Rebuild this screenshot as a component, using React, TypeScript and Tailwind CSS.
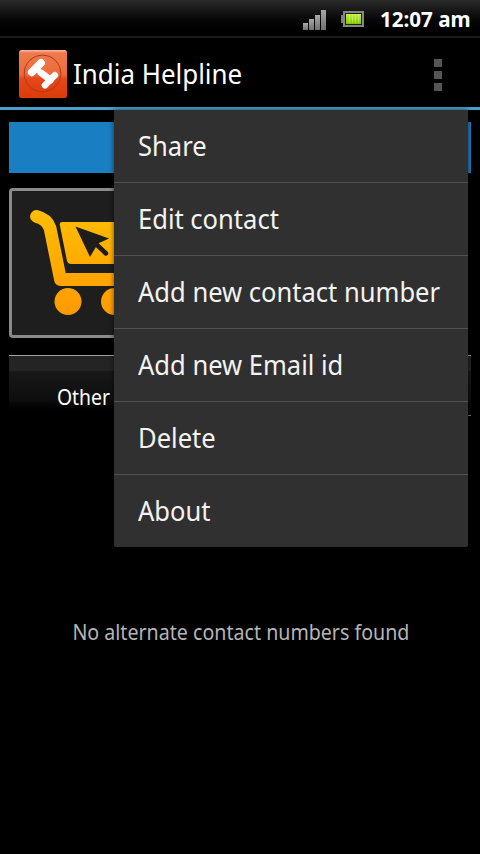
const menuItems = [
  'Share',
  'Edit contact',
  'Add new contact number',
  'Add new Email id',
  'Delete',
  'About',
];

function SignalIcon() {
  return (
    <svg width="24" height="21" viewBox="0 0 24 21">
      <defs>
        <linearGradient id="bars" x1="0" y1="0" x2="0" y2="1">
          <stop offset="0" stopColor="#a8a8a8" />
          <stop offset="1" stopColor="#6f6f6f" />
        </linearGradient>
      </defs>
      <rect x="0" y="13" width="5" height="7" fill="url(#bars)" />
      <rect x="6" y="9" width="5" height="11" fill="url(#bars)" />
      <rect x="12" y="5" width="5" height="15" fill="url(#bars)" />
      <rect x="18" y="0" width="5" height="20" fill="url(#bars)" />
    </svg>
  );
}

function BatteryIcon() {
  return (
    <svg width="24" height="17" viewBox="0 0 24 17">
      <defs>
        <linearGradient id="charge" x1="0" y1="0" x2="0" y2="1">
          <stop offset="0" stopColor="#c8f04a" />
          <stop offset="1" stopColor="#7cc800" />
        </linearGradient>
      </defs>
      <rect x="0" y="4" width="3" height="8" fill="#7d7d7d" />
      <rect x="3" y="1" width="19" height="14" fill="#1c2410" stroke="#858585" strokeWidth="2" />
      <rect x="5" y="3" width="15" height="10" fill="url(#charge)" />
      <path d="M8.5 3v9M11.5 3v9M14.5 3v9M17.5 3v9" stroke="#e0f88a" strokeWidth="0.6" opacity="0.7" />
    </svg>
  );
}

function AppLogo() {
  return (
    <svg width="48" height="48" viewBox="0 0 48 48">
      <defs>
        <linearGradient id="logo" x1="0" y1="0" x2="0" y2="1">
          <stop offset="0" stopColor="#f9c0a8" />
          <stop offset="0.06" stopColor="#ee7a4c" />
          <stop offset="0.5" stopColor="#ee6a3a" />
          <stop offset="0.6" stopColor="#e5481a" />
          <stop offset="1" stopColor="#dc3a08" />
        </linearGradient>
      </defs>
      <rect width="48" height="48" rx="2.5" fill="url(#logo)" />
      <circle cx="23.5" cy="23.5" r="18.3" fill="none" stroke="#a83c1c" strokeWidth="1" />
      <g stroke="#fff" strokeLinecap="round" fill="none">
        <path d="M12.8 22.3L22 13" strokeWidth="7.8" />
        <path d="M16 20L20 21" strokeWidth="4" />
        <path d="M22 22.8L31.5 30" strokeWidth="6.8" />
        <path d="M26 35.3L35.8 25.3" strokeWidth="6.6" />
      </g>
    </svg>
  );
}

function CartIcon() {
  return (
    <svg width="142" height="144" viewBox="12 191 142 144">
      <defs>
        <linearGradient id="cart" gradientUnits="userSpaceOnUse" x1="0" y1="210" x2="0" y2="315">
          <stop offset="0" stopColor="#ffbe00" />
          <stop offset="1" stopColor="#ff9a00" />
        </linearGradient>
      </defs>
      <path
        d="M36.5 216.5Q47 219 50 228L60.5 279.5H144"
        fill="none"
        stroke="url(#cart)"
        strokeWidth="12.8"
        strokeLinecap="round"
        strokeLinejoin="round"
      />
      <path d="M62 222H150L140 264H71Q68 264 67 261L60 226Q59 222 62 222Z" fill="url(#cart)" />
      <circle cx="68" cy="301.5" r="13.5" fill="url(#cart)" />
      <circle cx="114.5" cy="301.5" r="13.5" fill="url(#cart)" />
      <path d="M75.5 226.5L109 238.5L98 243.5L90 257Z" fill="#1e1d1b" />
      <path d="M95 243L106 253.5" stroke="#1e1d1b" strokeWidth="4.5" strokeLinecap="round" />
    </svg>
  );
}

function OverflowMenu() {
  return (
    <ul className="absolute top-[110px] left-[114px] w-[354px] divide-y divide-[#505050] rounded-b-xs bg-[#303030] shadow-[0_0_5px_rgba(0,0,0,0.6)]">
      {menuItems.map(item => (
        <li key={item} className="flex h-[73px] items-center pl-6 last:h-[72px]">
          <span className="origin-left scale-x-[0.946] whitespace-nowrap text-[27px] text-[#f3f3f3]">{item}</span>
        </li>
      ))}
    </ul>
  );
}

export default function App() {
  return (
    <div className="relative flex h-[854px] w-[480px] flex-col overflow-hidden bg-black font-['Noto_Sans',sans-serif] text-white">
      {/* Status bar */}
      <div className="flex h-[38px] shrink-0 items-start border-b-2 border-[#1c1c1c] bg-linear-to-b from-[#2b2b2b] to-black pl-[303px]">
        <div className="mt-2.5"><SignalIcon /></div>
        <div className="mt-[11px] ml-3.5"><BatteryIcon /></div>
        <span className="mt-1 ml-[15px] origin-left scale-x-[0.98] whitespace-nowrap text-[21px] leading-[30px] font-bold">
          12:07 am
        </span>
      </div>

      {/* Action bar */}
      <header className="flex h-[72px] shrink-0 items-center border-b-[3px] border-[#4a9fcb] pt-[3px] pr-[38px] pl-[19px]">
        <AppLogo />
        <h1 className="ml-1.5 origin-left scale-x-[0.96] whitespace-nowrap text-[27px]">India Helpline</h1>
        <div className="mt-0.5 ml-auto flex flex-col gap-1">
          <div className="size-2 bg-[#555]" />
          <div className="size-2 bg-[#555]" />
          <div className="size-2 bg-[#555]" />
        </div>
      </header>

      <main className="flex flex-col px-[9px] pt-3">
        <div className="h-[51px] bg-[#1a7ec3]" />
        <div className="mt-[15px] h-[150px] w-[148px] rounded-sm border-[3px] border-[#8a8a8a] bg-[#1e1e1e]">
          <CartIcon />
        </div>

        {/* Tabs */}
        <div className="mt-[17px] flex h-[61px] flex-col border-t border-[#a0a0a0]">
          <div className="h-[15px] bg-[#242424]" />
          <div className="flex h-[45px] bg-linear-to-b from-[#181818] via-[#0e0e0e] via-65% to-black">
            <div className="flex flex-1 items-center pl-12">
              <span className="mt-[5px] origin-left scale-x-[0.88] text-[22px]">Other</span>
            </div>
            <div className="flex-1 border-b border-[#707070]" />
          </div>
        </div>

        <p className="mt-[199px] flex justify-center pl-px text-[22px] leading-8 text-[#b5b5b5]">
          <span className="scale-x-[0.892] whitespace-nowrap">No alternate contact numbers found</span>
        </p>
      </main>

      <OverflowMenu />
    </div>
  );
}
